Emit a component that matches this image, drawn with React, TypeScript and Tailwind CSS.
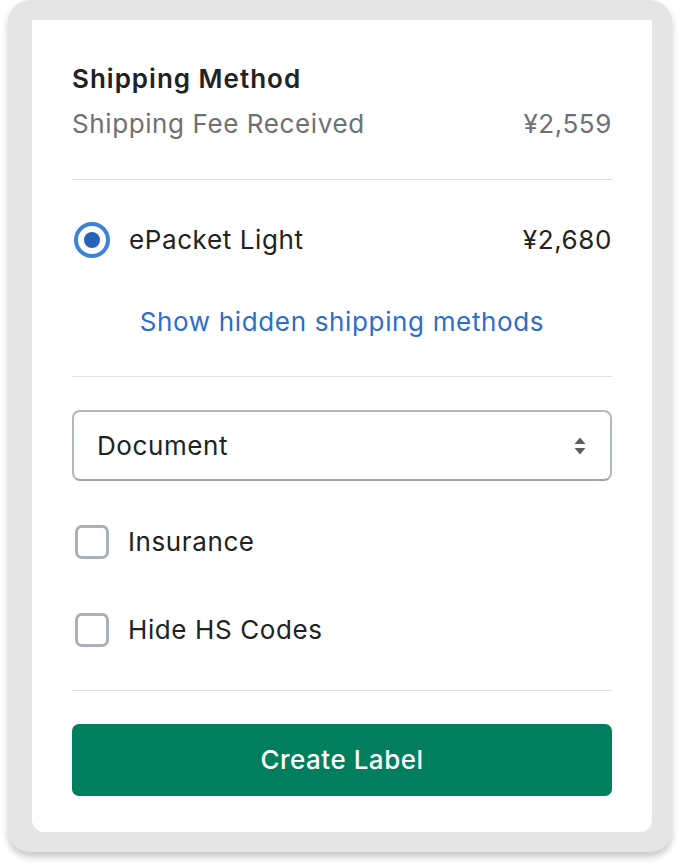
import React, { useState } from "react";

const font = { fontFamily: "Inter, 'Noto Sans', 'Liberation Sans', sans-serif" };

function Divider({ className = "" }: { className?: string }) {
  return <div className={"h-px bg-[#dcdee0] " + className} />;
}

function Checkbox({ label, className = "" }: { label: string; className?: string }) {
  const [checked, setChecked] = useState(false);
  return (
    <label className={"flex items-center gap-[19px] cursor-pointer " + className}>
      <span
        onClick={() => setChecked(!checked)}
        className="w-[34px] h-[34px] ml-[3px] rounded-[7px] border-[3px] border-[#abb0b6] bg-white flex items-center justify-center"
      >
        {checked && <span className="w-3 h-3 bg-[#2c6ecb] rounded-sm" />}
      </span>
      <span className="text-[26px] leading-[32px] tracking-[0.6px] text-[#202223]">{label}</span>
    </label>
  );
}

export default function App() {
  const [selected] = useState("epacket");

  return (
    <div className="w-[680px] h-[868px] bg-white" style={font}>
      <div className="ml-[8px] mr-[8px] h-[852px] rounded-[22px] bg-[#e5e5e5] pt-[20px] pl-[24px] pr-[20px] shadow-[0_5px_7px_rgba(0,0,0,0.22)]">
        <div className="bg-white rounded-b-[12px] h-[812px] px-[40px] pt-[43px]">
          {/* Header */}
          <h2 className="text-[26px] leading-[32px] font-semibold tracking-[1px] text-[#202223]">
            Shipping Method
          </h2>
          <div className="mt-[13px] flex items-center justify-between text-[26px] leading-[32px] tracking-[0.6px] text-[#6d7175]">
            <span>Shipping Fee Received</span>
            <span>¥2,559</span>
          </div>

          <Divider className="mt-[39px]" />

          {/* Method */}
          <div className="mt-[42px] flex items-center justify-between">
            <div className="flex items-center gap-[19px]">
              <span className="ml-[2px] w-[36px] h-[36px] rounded-full border-[4px] border-[#3b82d9] flex items-center justify-center">
                {selected === "epacket" && (
                  <span className="w-[16px] h-[16px] rounded-full bg-[#2463bc]" />
                )}
              </span>
              <span className="text-[26px] leading-[32px] tracking-[0.6px] text-[#202223]">ePacket Light</span>
            </div>
            <span className="text-[26px] leading-[32px] tracking-[0.6px] text-[#202223]">¥2,680</span>
          </div>

          <div className="mt-[48px] text-center">
            <button className="text-[26px] leading-[32px] tracking-[0.65px] text-[#2c6ecb]">
              Show hidden shipping methods
            </button>
          </div>

          <Divider className="mt-[38px]" />

          {/* Package type */}
          <div className="mt-[33px] h-[71px] rounded-[8px] border-2 border-[#b3b8bd] border-b-[#9ea4aa] flex items-center justify-between pl-[23px] pr-[23px]">
            <span className="text-[26px] leading-[32px] tracking-[0.6px] text-[#202223]">Document</span>
            <svg width="14" height="20" viewBox="0 0 14 20" fill="#5c5f62">
              <path d="M7 1.5 L12.5 8 H1.5 Z" />
              <path d="M7 18.5 L12.5 12 H1.5 Z" />
            </svg>
          </div>

          <Checkbox label="Insurance" className="mt-[44px]" />
          <Checkbox label="Hide HS Codes" className="mt-[54px]" />

          <Divider className="mt-[43px]" />

          <button className="mt-[33px] w-full h-[72px] rounded-[7px] bg-[#007f5f] text-white text-[26px] leading-[32px] tracking-[0.5px] font-medium">
            Create Label
          </button>
        </div>
      </div>
    </div>
  );
}
